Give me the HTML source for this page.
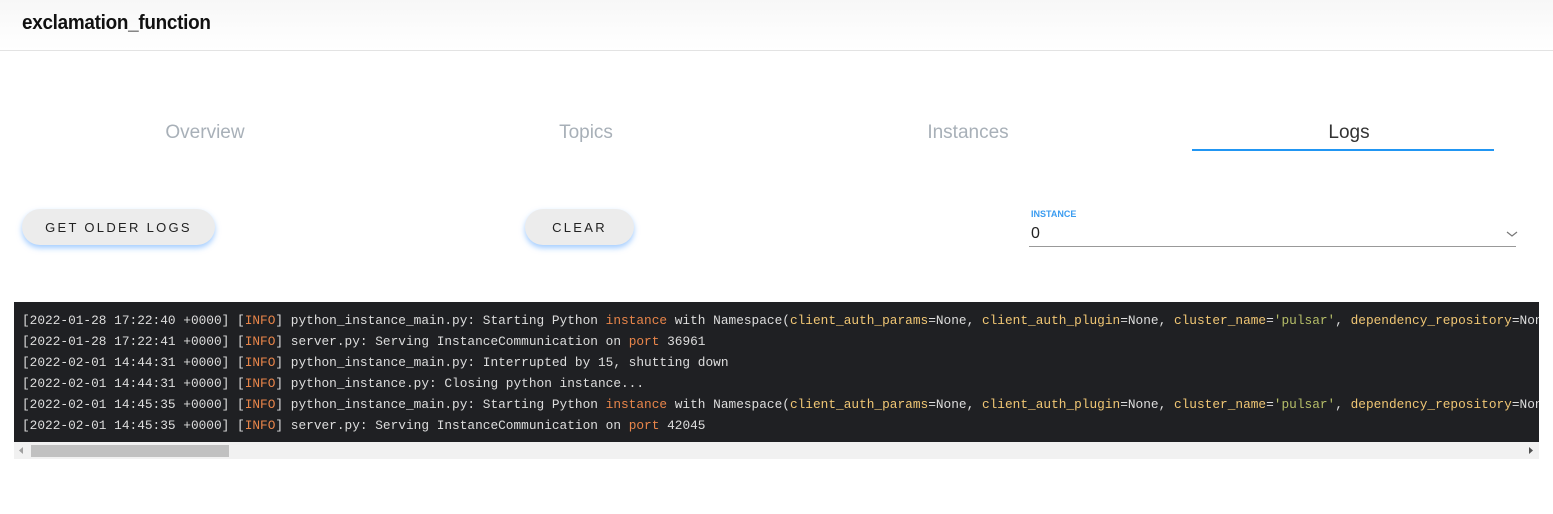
<!DOCTYPE html>
<html><head><meta charset="utf-8"><style>
*{margin:0;padding:0;box-sizing:border-box}
body{width:1553px;height:514px;background:#fff;font-family:"Liberation Sans",sans-serif;position:relative;overflow:hidden}
.hdr{position:absolute;left:0;top:0;width:1553px;height:51px;border-bottom:1px solid #e3e3e3;background:linear-gradient(#f7f7f7,#fff)}
.hdr span{position:absolute;left:22px;top:12px;font-size:20px;font-weight:bold;color:#111;letter-spacing:-0.3px;transform:scaleX(0.945);transform-origin:left}
.tab{position:absolute;top:122px;width:300px;text-align:center;font-size:19px;color:#a8b0b8}
.tab.act{color:#333}
.ul{position:absolute;left:1192px;top:149px;width:302px;height:2px;background:#2196f3}
.btn{position:absolute;top:209px;height:36px;border-radius:18px;background:#ececec;box-shadow:0 3px 6px rgba(100,170,255,.6);font-size:13px;letter-spacing:2.3px;color:#222;text-align:center;line-height:37px}
.lbl{position:absolute;left:1031px;top:209px;font-size:9px;font-weight:bold;color:#3b9cf0}
.val{position:absolute;left:1031px;top:225px;font-size:16px;color:#222}
.line{position:absolute;left:1029px;top:246px;width:487px;height:1px;background:#999}
.log{position:absolute;left:14px;top:302px;width:1525px;height:140px;background:#1f2023;overflow:hidden;padding:8px 0 0 8px;font-family:"Liberation Mono",monospace;font-size:12.8px;line-height:21px;color:#ddd;white-space:pre}
.o{color:#e8854a}.y{color:#f0c674}.g{color:#b5bd68}
.sb{position:absolute;left:14px;top:442px;width:1525px;height:17px;background:#f1f1f1}
.th{position:absolute;left:17px;top:3px;width:198px;height:12px;background:#c1c1c1}
</style></head><body>
<div class="hdr"><span>exclamation_function</span></div>
<div class="tab" style="left:55px">Overview</div>
<div class="tab" style="left:436px">Topics</div>
<div class="tab" style="left:818px">Instances</div>
<div class="tab act" style="left:1199px">Logs</div>
<div class="ul"></div>
<div class="btn" style="left:22px;width:193px">GET OLDER LOGS</div>
<div class="btn" style="left:525px;width:109px">CLEAR</div>
<div class="lbl">INSTANCE</div>
<div class="val">0</div>
<svg style="position:absolute;left:1506px;top:230px" width="12" height="8"><path d="M1 2l5 4 5-4" fill="none" stroke="#777" stroke-width="1.2"/></svg>
<div class="line"></div>
<div class="log">[2022-01-28 17:22:40 +0000] [<span class="o">INFO</span>] python_instance_main.py: Starting Python <span class="o">instance</span> with Namespace(<span class="y">client_auth_params</span>=None, <span class="y">client_auth_plugin</span>=None, <span class="y">cluster_name</span>=<span class="g">'pulsar'</span>, <span class="y">dependency_repository</span>=None
[2022-01-28 17:22:41 +0000] [<span class="o">INFO</span>] server.py: Serving InstanceCommunication on <span class="o">port</span> 36961
[2022-02-01 14:44:31 +0000] [<span class="o">INFO</span>] python_instance_main.py: Interrupted by 15, shutting down
[2022-02-01 14:44:31 +0000] [<span class="o">INFO</span>] python_instance.py: Closing python instance...
[2022-02-01 14:45:35 +0000] [<span class="o">INFO</span>] python_instance_main.py: Starting Python <span class="o">instance</span> with Namespace(<span class="y">client_auth_params</span>=None, <span class="y">client_auth_plugin</span>=None, <span class="y">cluster_name</span>=<span class="g">'pulsar'</span>, <span class="y">dependency_repository</span>=None
[2022-02-01 14:45:35 +0000] [<span class="o">INFO</span>] server.py: Serving InstanceCommunication on <span class="o">port</span> 42045</div>
<div class="sb"><div class="th"></div>
<svg style="position:absolute;left:5px;top:5px" width="5" height="7"><path d="M4 0v7L0 3.5z" fill="#a0a0a0"/></svg>
<svg style="position:absolute;right:5px;top:5px" width="5" height="7"><path d="M0 0v7l4-3.5z" fill="#505050"/></svg>
</div>
</body></html>
